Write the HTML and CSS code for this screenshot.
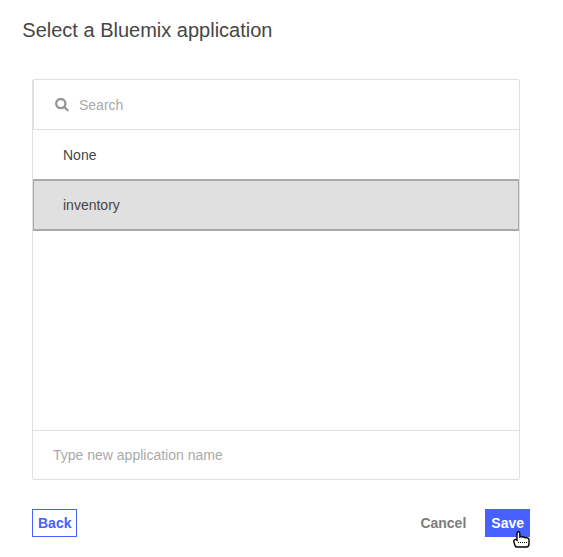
FILE: index.html
```html
<!DOCTYPE html>
<html lang="en">
<head>
<meta charset="utf-8">
<title>Select a Bluemix application</title>
<link rel="stylesheet" href="styles.css">
</head>
<body>
<main class="dialog">
  <h1 class="title">Select a Bluemix application</h1>
  <section class="picker">
    <label class="search">
      <svg class="search-icon" viewBox="0 0 14 14" width="14" height="14"><circle cx="5.8" cy="5.6" r="4.6"/><path d="M9.3 9L12.6 12.3"/></svg>
      <span>Search</span>
    </label>
    <ul class="options">
      <li class="option">None</li>
      <li class="option selected">inventory</li>
    </ul>
    <div class="new-name">Type new application name</div>
  </section>
  <footer class="actions">
    <button class="button back">Back</button>
    <button class="button cancel">Cancel</button>
    <div class="save-wrap">
      <button class="button save">Save</button>
      <svg class="cursor" viewBox="0 0 17 17" width="17" height="17"><path d="M4 9.2V2.2Q4 .8 5.4 .8T6.8 2.2V5.8Q8.5 5 9.4 6.2Q11 5.5 12.1 6.8Q13.2 6.2 14.3 7Q16 7 16 9V13Q16 16 13.3 16H4Q2.2 16 1.8 14L1 11.2Q.4 9.2 1.5 8.8Q2.7 8.2 4 9.2Z"/><path class="knuckles" d="M5 11.5H14"/></svg>
    </div>
  </footer>
</main>
</body>
</html>
```
FILE: styles.css
```css
* { box-sizing: border-box; }
body {
  margin: 0;
  background: #fff;
  color: #464646;
  font: 14px/20px "Liberation Sans", Arial, sans-serif;
}
.dialog { min-height: 557px; padding: 18px 33px 0 32px; }
.title {
  margin: 0 0 37px -9.7px;
  font-size: 20px;
  font-weight: 400;
  line-height: 24px;
}
.picker {
  display: flex;
  flex-direction: column;
  width: 488px;
  height: 401px;
  border: 1px solid #e0e0e0;
  border-radius: 2px;
}
.search {
  display: flex;
  align-items: center;
  gap: 10px;
  height: 50px;
  padding-left: 21px;
  border-left: 1px solid #e0e0e0;
  border-bottom: 1px solid #e0e0e0;
  color: #aaa;
}
.search-icon { fill: none; stroke: #969696; stroke-width: 2.3; stroke-linecap: round; }
.options { flex: 1; margin: 0; padding: 0; list-style: none; }
.option { height: 50px; padding: 15px 30px; }
.selected {
  height: 52px;
  margin-top: -1px;
  padding: 14px 29px;
  border: 1px solid #a9a9a9;
  border-width: 2px 1px;
  background: #e0e0e0;
}
.new-name {
  height: 49px;
  padding: 14px 20px;
  border-top: 1px solid #e0e0e0;
  color: #aaa;
}
.actions { display: flex; align-items: center; margin-top: 29px; width: 498px; }
.button {
  height: 28px;
  padding: 0 5px;
  border: 1px solid #4661ff;
  background: #fff;
  color: #4661ff;
  font: bold 14px/20px "Liberation Sans", Arial, sans-serif;
}
.cancel { margin-left: auto; margin-right: 13px; border-color: transparent; color: #7c7c7c; }
.save-wrap { position: relative; }
.save { display: block; background: #4661ff; color: #fff; }
.cursor { position: absolute; left: 28px; top: 22px; fill: #fff; stroke: #000; stroke-width: 1.4; }
.knuckles { stroke-width: 1; stroke-dasharray: 1 1; }
```
